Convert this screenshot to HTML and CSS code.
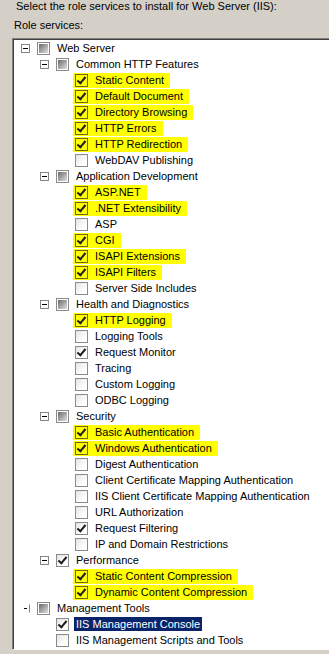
FILE: index.html
```html
<!DOCTYPE html>
<html lang="en">
<head>
    <meta charset="UTF-8">
    <title>Select Role Services</title>
    <link rel="stylesheet" href="styles.css">
</head>
<body>
    <div class="wizard">
        <p class="prompt">Select the role services to install for Web Server (IIS):</p>
        <p class="caption">Role services:</p>

        <div class="tree">
            <div class="row lvl0"><span class="exp"></span><span class="mark"><span class="box partial"></span><span class="text">Web Server</span></span></div>
            <div class="row lvl1"><span class="exp"></span><span class="mark"><span class="box partial"></span><span class="text">Common HTTP Features</span></span></div>
            <div class="row lvl2"><span class="mark hl"><span class="box checked"></span><span class="text">Static Content</span></span></div>
            <div class="row lvl2"><span class="mark hl"><span class="box checked"></span><span class="text">Default Document</span></span></div>
            <div class="row lvl2"><span class="mark hl"><span class="box checked"></span><span class="text">Directory Browsing</span></span></div>
            <div class="row lvl2"><span class="mark hl"><span class="box checked"></span><span class="text">HTTP Errors</span></span></div>
            <div class="row lvl2"><span class="mark hl"><span class="box checked"></span><span class="text">HTTP Redirection</span></span></div>
            <div class="row lvl2"><span class="mark"><span class="box"></span><span class="text">WebDAV Publishing</span></span></div>
            <div class="row lvl1"><span class="exp"></span><span class="mark"><span class="box partial"></span><span class="text">Application Development</span></span></div>
            <div class="row lvl2"><span class="mark hl"><span class="box checked"></span><span class="text">ASP.NET</span></span></div>
            <div class="row lvl2"><span class="mark hl"><span class="box checked"></span><span class="text">.NET Extensibility</span></span></div>
            <div class="row lvl2"><span class="mark"><span class="box"></span><span class="text">ASP</span></span></div>
            <div class="row lvl2"><span class="mark hl"><span class="box checked"></span><span class="text">CGI</span></span></div>
            <div class="row lvl2"><span class="mark hl"><span class="box checked"></span><span class="text">ISAPI Extensions</span></span></div>
            <div class="row lvl2"><span class="mark hl"><span class="box checked"></span><span class="text">ISAPI Filters</span></span></div>
            <div class="row lvl2"><span class="mark"><span class="box"></span><span class="text">Server Side Includes</span></span></div>
            <div class="row lvl1"><span class="exp"></span><span class="mark"><span class="box partial"></span><span class="text">Health and Diagnostics</span></span></div>
            <div class="row lvl2"><span class="mark hl"><span class="box checked"></span><span class="text">HTTP Logging</span></span></div>
            <div class="row lvl2"><span class="mark"><span class="box"></span><span class="text">Logging Tools</span></span></div>
            <div class="row lvl2"><span class="mark"><span class="box checked"></span><span class="text">Request Monitor</span></span></div>
            <div class="row lvl2"><span class="mark"><span class="box"></span><span class="text">Tracing</span></span></div>
            <div class="row lvl2"><span class="mark"><span class="box"></span><span class="text">Custom Logging</span></span></div>
            <div class="row lvl2"><span class="mark"><span class="box"></span><span class="text">ODBC Logging</span></span></div>
            <div class="row lvl1"><span class="exp"></span><span class="mark"><span class="box partial"></span><span class="text">Security</span></span></div>
            <div class="row lvl2"><span class="mark hl"><span class="box checked"></span><span class="text">Basic Authentication</span></span></div>
            <div class="row lvl2"><span class="mark hl"><span class="box checked"></span><span class="text">Windows Authentication</span></span></div>
            <div class="row lvl2"><span class="mark"><span class="box"></span><span class="text">Digest Authentication</span></span></div>
            <div class="row lvl2"><span class="mark"><span class="box"></span><span class="text">Client Certificate Mapping Authentication</span></span></div>
            <div class="row lvl2"><span class="mark"><span class="box"></span><span class="text">IIS Client Certificate Mapping Authentication</span></span></div>
            <div class="row lvl2"><span class="mark"><span class="box"></span><span class="text">URL Authorization</span></span></div>
            <div class="row lvl2"><span class="mark"><span class="box checked"></span><span class="text">Request Filtering</span></span></div>
            <div class="row lvl2"><span class="mark"><span class="box"></span><span class="text">IP and Domain Restrictions</span></span></div>
            <div class="row lvl1"><span class="exp"></span><span class="mark"><span class="box checked"></span><span class="text">Performance</span></span></div>
            <div class="row lvl2"><span class="mark hl"><span class="box checked"></span><span class="text">Static Content Compression</span></span></div>
            <div class="row lvl2"><span class="mark hl"><span class="box checked"></span><span class="text">Dynamic Content Compression</span></span></div>
            <div class="row lvl0"><span class="exp clipped"></span><span class="mark"><span class="box partial"></span><span class="text">Management Tools</span></span></div>
            <div class="row lvl1"><span class="mark"><span class="box checked"></span><span class="text selected">IIS Management Console</span></span></div>
            <div class="row lvl1"><span class="mark"><span class="box"></span><span class="text">IIS Management Scripts and Tools</span></span></div>
        </div>
    </div>
</body>
</html>
```

FILE: styles.css
```css
html, body {
    margin: 0;
    height: 100%;
    overflow: hidden;
}
body {
    background-color: #d4d0c8;
    font-family: "Liberation Sans", Arial, sans-serif;
    font-size: 11px;
    color: #000;
}
.wizard {
    padding: 0 0 0 12px;
}
.prompt {
    margin: 0 0 6px 4px;
    line-height: 13px;
}
.caption {
    margin: 0 0 6px 2px;
    line-height: 13px;
}
.tree {
    height: 609px;
    overflow: hidden;
    background-color: #fff;
    border: 1px solid;
    border-color: #808080 #fff #fff #808080;
    border-right: 0;
    box-shadow: inset 1px 1px 0 #404040;
    padding: 1px 0 0 1px;
}
.row {
    display: flex;
    align-items: center;
    height: 16px;
    white-space: nowrap;
}
.lvl0 { padding-left: 7px; }
.lvl1 { padding-left: 26px; }
.lvl2 { padding-left: 61px; }
.lvl1 .mark:first-child { margin-left: 16px; }

/* expander [-] */
.exp {
    position: relative;
    width: 7px;
    height: 7px;
    border: 1px solid #848484;
    background-color: #fff;
    margin-right: 7px;
    flex: none;
}
.exp::after {
    content: "";
    position: absolute;
    left: 1px;
    top: 3px;
    width: 5px;
    height: 1px;
    background-color: #000;
}
.exp.clipped {
    border-left-color: #fff;
    border-top-color: #fff;
    border-bottom-color: #fff;
}
.exp.clipped::after {
    left: 2px;
    width: 3px;
}

.mark {
    display: flex;
    align-items: center;
    height: 15px;
    padding-right: 4px;
}
.mark.hl {
    background-color: #ffff00;
    margin-left: -2px;
    padding-left: 2px;
    border-radius: 1px;
}

/* checkbox */
.box {
    position: relative;
    width: 11px;
    height: 11px;
    border: 1px solid #8a8a8a;
    background: linear-gradient(135deg, #e4e4e4, #fff 70%);
    flex: none;
}
.hl .box {
    background: transparent;
    border-color: #6e6e00;
}
.box.partial {
    background: #fff;
}
.box.partial::before {
    content: "";
    position: absolute;
    left: 1px;
    top: 1px;
    width: 9px;
    height: 9px;
    background: linear-gradient(135deg, #6a6a6a, #e0e0e0);
}
.box.checked::after {
    content: "";
    position: absolute;
    left: 3px;
    top: 0px;
    width: 3px;
    height: 7px;
    border: solid #1e1e1e;
    border-width: 0 2px 2px 0;
    transform: rotate(40deg);
}

.text {
    margin-left: 5px;
    padding: 0 2px;
    line-height: 14px;
}
.text.selected {
    background-color: #0a246a;
    color: #fff;
}
```
